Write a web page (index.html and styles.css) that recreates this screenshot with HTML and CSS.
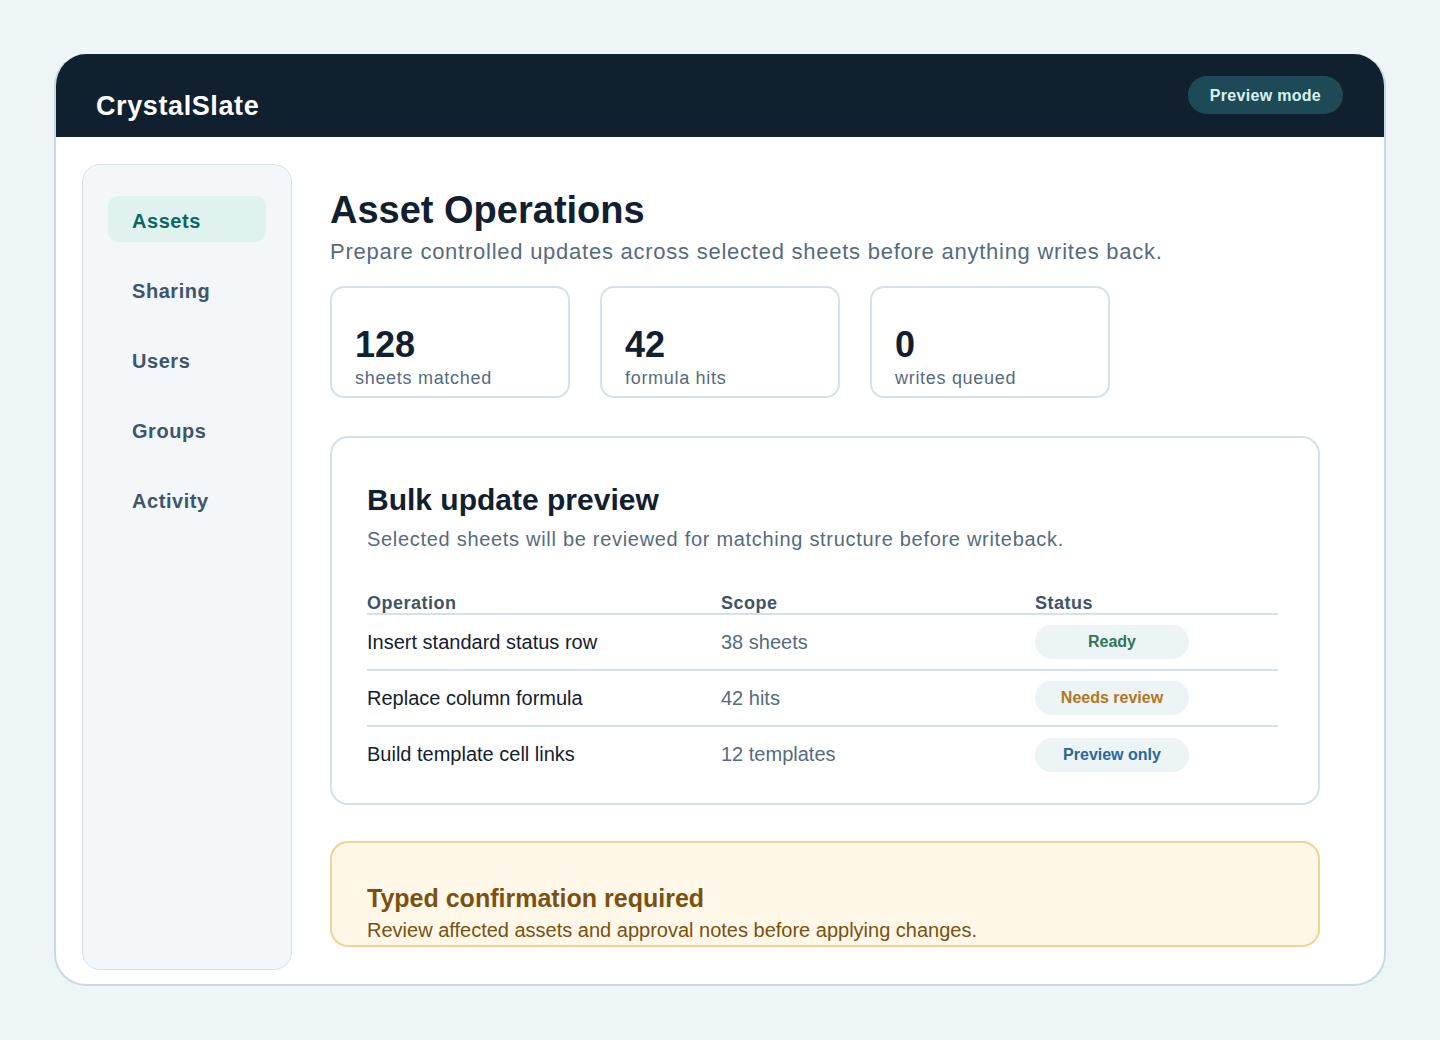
FILE: index.html
```html
<!DOCTYPE html>
<html lang="en">
  <head>
    <meta charset="UTF-8" />
    <meta name="viewport" content="width=device-width, initial-scale=1.0" />
    <title>CrystalSlate - Asset Operations</title>
    <link rel="stylesheet" href="styles.css">
  </head>
  <body>
    <div class="app">
      <header class="topbar">
        <div class="brand">CrystalSlate</div>
        <span class="mode-pill">Preview mode</span>
      </header>

      <div class="layout">
        <nav class="sidebar">
          <a class="nav-item active" href="#">Assets</a>
          <a class="nav-item" href="#">Sharing</a>
          <a class="nav-item" href="#">Users</a>
          <a class="nav-item" href="#">Groups</a>
          <a class="nav-item" href="#">Activity</a>
        </nav>

        <main class="main">
          <h1>Asset Operations</h1>
          <p class="lead">Prepare controlled updates across selected sheets before anything writes back.</p>

          <div class="stats">
            <div class="stat">
              <div class="stat-value">128</div>
              <div class="stat-label">sheets matched</div>
            </div>
            <div class="stat">
              <div class="stat-value">42</div>
              <div class="stat-label">formula hits</div>
            </div>
            <div class="stat">
              <div class="stat-value">0</div>
              <div class="stat-label">writes queued</div>
            </div>
          </div>

          <section class="panel">
            <h2>Bulk update preview</h2>
            <p class="panel-sub">Selected sheets will be reviewed for matching structure before writeback.</p>

            <table class="ops">
              <thead>
                <tr>
                  <th class="col-op">Operation</th>
                  <th class="col-scope">Scope</th>
                  <th>Status</th>
                </tr>
              </thead>
              <tbody>
                <tr>
                  <td>Insert standard status row</td>
                  <td class="scope">38 sheets</td>
                  <td><span class="badge ready">Ready</span></td>
                </tr>
                <tr>
                  <td>Replace column formula</td>
                  <td class="scope">42 hits</td>
                  <td><span class="badge review">Needs review</span></td>
                </tr>
                <tr>
                  <td>Build template cell links</td>
                  <td class="scope">12 templates</td>
                  <td><span class="badge preview">Preview only</span></td>
                </tr>
              </tbody>
            </table>
          </section>

          <div class="notice">
            <h3>Typed confirmation required</h3>
            <p>Review affected assets and approval notes before applying changes.</p>
          </div>
        </main>
      </div>
    </div>
  </body>
</html>
```

FILE: styles.css
```css
:root {
  --page-bg: #edf5f7;
  --ink: #11202f;
  --muted: #566b7e;
  --line: #d5e1e8;
  --nav-text: #3f556a;
}

* {
  box-sizing: border-box;
}

body {
  margin: 0;
  padding: 54px;
  background: var(--page-bg);
  font-family: "Liberation Sans", Arial, sans-serif;
  color: var(--ink);
}

.app {
  height: 932px;
  background: #fff;
  border: 2px solid #c9d9e2;
  border-top: none;
  border-radius: 32px;
  overflow: hidden;
  display: flex;
  flex-direction: column;
}

.topbar {
  height: 83px;
  flex: none;
  background: #11202f;
  display: flex;
  align-items: center;
  justify-content: space-between;
  padding: 14px 43px 0 42px;
  margin: 0 -2px;
}

.brand {
  color: #fff;
  font-size: 27px;
  letter-spacing: 0.6px;
  font-weight: bold;
  margin-top: 8px;
}

.mode-pill {
  background: #1e4a58;
  color: #d9f1f1;
  font-size: 16px;
  line-height: 18px;
  letter-spacing: 0.3px;
  font-weight: bold;
  padding: 11px 22px 9px;
  border-radius: 20px;
  margin-top: -16px;
}

.layout {
  flex: 1;
  display: grid;
  grid-template-columns: 210px 1fr;
  column-gap: 38px;
  padding: 27px 64px 14px 26px;
  min-height: 0;
}

.sidebar {
  background: #f3f7fa;
  border: 1px solid var(--line);
  border-radius: 18px;
  padding: 31px 25px;
  display: flex;
  flex-direction: column;
  gap: 24px;
}

.nav-item {
  display: block;
  height: 46px;
  line-height: 50px;
  padding: 0 24px;
  border-radius: 10px;
  color: var(--nav-text);
  font-size: 20px;
  letter-spacing: 0.55px;
  font-weight: bold;
  text-decoration: none;
}

.nav-item.active {
  background: #dff2ef;
  color: #0c6660;
}

.main {
  padding-top: 23px;
  overflow: hidden;
  min-width: 0;
}

h1 {
  margin: 0;
  font-size: 38px;
  line-height: 46px;
  font-weight: bold;
}

.lead {
  margin: 5px 0 0;
  font-size: 22px;
  line-height: 28px;
  letter-spacing: 0.75px;
  color: var(--muted);
}

.stats {
  display: flex;
  gap: 30px;
  margin-top: 20px;
}

.stat {
  width: 240px;
  height: 112px;
  border: 2px solid var(--line);
  border-radius: 14px;
  padding: 37px 23px 0;
}

.stat-value {
  font-size: 36px;
  line-height: 40px;
  font-weight: bold;
}

.stat-label {
  margin-top: 2px;
  font-size: 18px;
  line-height: 22px;
  letter-spacing: 0.7px;
  color: var(--muted);
}

.panel {
  margin-top: 38px;
  border: 2px solid var(--line);
  border-radius: 18px;
  padding: 44px 40px 21px 35px;
}

h2 {
  margin: 0;
  font-size: 30px;
  line-height: 36px;
  font-weight: bold;
}

.panel-sub {
  margin: 8px 0 0;
  font-size: 20px;
  line-height: 26px;
  letter-spacing: 0.7px;
  color: var(--muted);
}

.ops {
  width: 100%;
  margin-top: 41px;
  border-collapse: collapse;
  font-size: 20px;
}

.ops th {
  text-align: left;
  font-size: 18px;
  line-height: 20px;
  letter-spacing: 0.5px;
  color: #3e5468;
  padding: 0;
  border-bottom: 2px solid var(--line);
}

.col-op {
  width: 354px;
}

.col-scope {
  width: 314px;
}

.ops td {
  height: 56px;
  padding: 0;
  color: #142030;
  border-bottom: 2px solid var(--line);
}

.ops tbody tr:last-child td {
  border-bottom: none;
}

.ops td.scope {
  color: var(--muted);
}

.badge {
  display: inline-block;
  width: 154px;
  height: 34px;
  line-height: 34px;
  text-align: center;
  border-radius: 17px;
  background: #ecf4f6;
  font-size: 16px;
  font-weight: bold;
}

.badge.ready {
  color: #2f7658;
}

.badge.review {
  color: #b4761f;
}

.badge.preview {
  color: #2a679a;
}

.notice {
  margin-top: 36px;
  background: #fff7e7;
  border: 2px solid #f0d491;
  border-radius: 18px;
  padding: 40px 35px 1px;
  color: #7a5111;
}

.notice h3 {
  margin: 0;
  font-size: 25px;
  line-height: 30px;
}

.notice p {
  margin: 3px 0 0;
  font-size: 20px;
  line-height: 28px;
}
```
